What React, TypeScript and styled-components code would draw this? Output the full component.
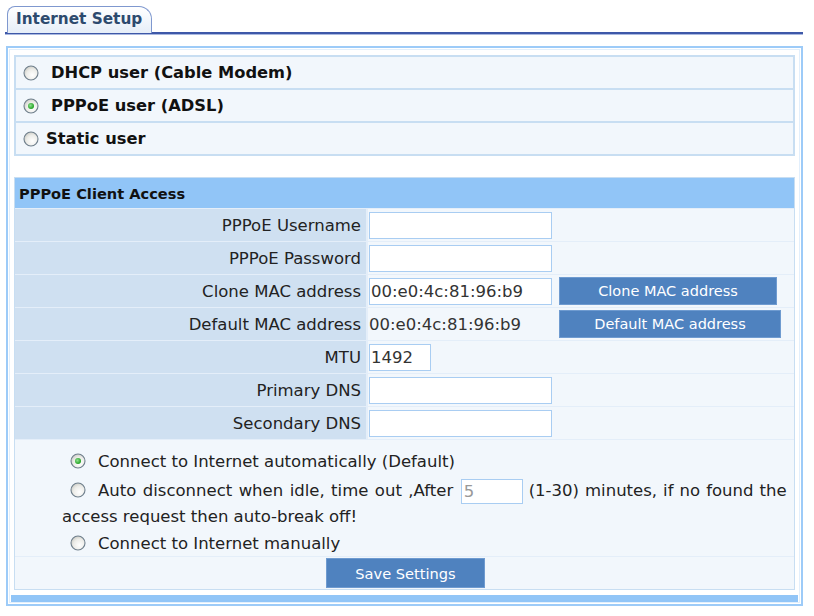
import { FC, ReactNode } from "react";
import styled, { createGlobalStyle } from "styled-components";

const GlobalStyle = createGlobalStyle`
  html, body {
    margin: 0;
    padding: 0;
    background: #fff;
  }
  body {
    font-family: "DejaVu Sans", Verdana, sans-serif;
    font-size: 16.5px;
    color: #1a1a1a;
  }
`;

const Radio: FC<{ checked?: boolean }> = ({ checked }) => (
  <RadioIcon width="16" height="16" viewBox="0 0 16 16">
    <defs>
      <radialGradient id="rbg" cx="0.6" cy="0.65" r="0.7">
        <stop offset="0" stopColor="#ffffff" />
        <stop offset="0.6" stopColor="#ecece8" />
        <stop offset="1" stopColor="#c9c9c2" />
      </radialGradient>
      <radialGradient id="rdot" cx="0.4" cy="0.4" r="0.6">
        <stop offset="0" stopColor="#8fe08f" />
        <stop offset="1" stopColor="#21a121" />
      </radialGradient>
    </defs>
    <circle cx="8" cy="8" r="7" fill="url(#rbg)" stroke="#6f7f8c" strokeWidth="1.1" />
    {checked && <circle cx="8" cy="8" r="3" fill="url(#rdot)" />}
  </RadioIcon>
);

const App: FC = () => {
  return (
    <>
      <GlobalStyle />
      <Page>
        <TabBar>
          <Tab>Internet Setup</Tab>
        </TabBar>

        <Frame>
          <ModeTable>
            <ModeRow>
              <Radio />
              <ModeLabel gap={12}>DHCP user (Cable Modem)</ModeLabel>
            </ModeRow>
            <ModeRow>
              <Radio checked />
              <ModeLabel gap={12}>PPPoE user (ADSL)</ModeLabel>
            </ModeRow>
            <ModeRow>
              <Radio />
              <ModeLabel gap={7}>Static user</ModeLabel>
            </ModeRow>
          </ModeTable>

          <Section>
            <SectionHead>PPPoE Client Access</SectionHead>
            <Field label="PPPoE Username">
              <TextInput width={183} />
            </Field>
            <Field label="PPPoE Password">
              <TextInput width={183} type="password" />
            </Field>
            <Field label="Clone MAC address">
              <TextInput width={183} defaultValue="00:e0:4c:81:96:b9" />
              <ActionButton width={218}>Clone MAC address</ActionButton>
            </Field>
            <Field label="Default MAC address">
              <PlainValue>00:e0:4c:81:96:b9</PlainValue>
              <ActionButton width={222}>Default MAC address</ActionButton>
            </Field>
            <Field label="MTU">
              <TextInput width={62} defaultValue="1492" />
            </Field>
            <Field label="Primary DNS">
              <TextInput width={183} />
            </Field>
            <Field label="Secondary DNS">
              <TextInput width={183} />
            </Field>

            <OptionCell>
              <OptionLine>
                <Radio checked />
                <span>Connect to Internet automatically (Default)</span>
              </OptionLine>
              <OptionLine tall>
                <Radio />
                <Spaced space={1.2}>Auto disconnect when idle, time out ,After </Spaced>
                <IdleInput defaultValue="5" />
                <Spaced space={0.8}> (1-30) minutes, if no found the</Spaced> access
                request then auto-break off!
              </OptionLine>
              <OptionLine>
                <Radio />
                <span>Connect to Internet manually</span>
              </OptionLine>
            </OptionCell>

            <SaveCell>
              <SaveButton>Save Settings</SaveButton>
            </SaveCell>
          </Section>

          <BottomBar />
        </Frame>
      </Page>
    </>
  );
};

const Field: FC<{ label: string; children: ReactNode }> = ({ label, children }) => (
  <FieldRow>
    <FieldLabel>{label}</FieldLabel>
    <FieldValue>{children}</FieldValue>
  </FieldRow>
);

export default App;

const Page = styled.div`
  width: 814px;
  height: 616px;
  padding-top: 6px;
  box-sizing: border-box;
  overflow: hidden;
`;

const TabBar = styled.div`
  display: flex;
  margin-left: 5px;
  width: 798px;
  padding-left: 2px;
  box-sizing: border-box;
  border-bottom: 2px solid #3e58a8;
  box-shadow: 0 1px 0 #a9b8e0;
`;

const Tab = styled.div`
  width: 145px;
  height: 27px;
  box-sizing: border-box;
  border: 1px solid #7f98cf;
  border-bottom: none;
  border-radius: 8px 13px 0 0;
  background: linear-gradient(#ffffff, #e6eef8);
  color: #2d4a6e;
  font-weight: bold;
  font-size: 15.3px;
  padding: 3px 0 0 8px;
  margin-bottom: -1px;
`;

const Frame = styled.div`
  margin: 12px 0 0 6px;
  width: 797px;
  box-sizing: border-box;
  border: 2px solid #9dcbf8;
  box-shadow: inset 0 0 0 1px #fff, inset 0 0 0 2px #e2effc;
  padding: 7px 6px 2px;
  display: flex;
  flex-direction: column;
`;

const ModeTable = styled.div`
  display: flex;
  flex-direction: column;
  border: 2px solid #c8def2;
  background: #c8def2;
  gap: 2px;
`;

const ModeRow = styled.div`
  display: flex;
  align-items: center;
  height: 31px;
  padding-left: 7px;
  background: #f2f7fc;
`;

const RadioIcon = styled.svg`
  flex: none;
  display: inline-block;
  vertical-align: middle;
`;

const ModeLabel = styled.span<{ gap: number }>`
  margin-left: ${(p) => p.gap}px;
  font-weight: bold;
  font-size: 16.3px;
  color: #111;
`;

const Section = styled.div`
  margin-top: 21px;
  display: flex;
  flex-direction: column;
  border: 1px solid #c8def2;
  background: #e4eef9;
  gap: 1px;
`;

const SectionHead = styled.div`
  height: 30px;
  display: flex;
  align-items: center;
  padding-left: 4px;
  background: #91c5f7;
  font-weight: bold;
  font-size: 14.6px;
  color: #111;
`;

const FieldRow = styled.div`
  display: grid;
  grid-template-columns: 351px 1fr;
  gap: 2px;
  height: 32px;
`;

const FieldLabel = styled.div`
  display: flex;
  align-items: center;
  justify-content: flex-end;
  padding-right: 5px;
  background: #cfe0f1;
  color: #222;
`;

const FieldValue = styled.div`
  display: flex;
  align-items: center;
  padding-left: 1px;
  background: #f2f7fc;
`;

const TextInput = styled.input<{ width: number }>`
  width: ${(p) => p.width}px;
  height: 27px;
  box-sizing: border-box;
  border: 1px solid #a9cdf2;
  background: #fff;
  font-family: "DejaVu Sans", Verdana, sans-serif;
  font-size: 16.5px;
  color: #333;
  padding: 0 1px;
  outline: none;
`;

const PlainValue = styled.span`
  width: 183px;
  color: #333;
`;

const ActionButton = styled.button<{ width: number }>`
  width: ${(p) => p.width}px;
  height: 28px;
  margin-left: 7px;
  border: 1px solid #6f9bd0;
  background: #4f82bf;
  color: #fff;
  font-family: "DejaVu Sans", Verdana, sans-serif;
  font-size: 14.5px;
  padding: 0;
`;

const OptionCell = styled.div`
  background: #f2f7fc;
  padding: 8px 0 0 47px;
  height: 116px;
  box-sizing: border-box;
`;

const OptionLine = styled.div<{ tall?: boolean }>`
  line-height: ${(p) => (p.tall ? "26px" : "27px")};
  margin-top: ${(p) => (p.tall ? "3px" : "0")};
  color: #222;

  ${RadioIcon} {
    margin: -3px 12px 0 8px;
  }
`;

const Spaced = styled.span<{ space: number }>`
  word-spacing: ${(p) => p.space}px;
`;

const IdleInput = styled.input`
  width: 62px;
  height: 25px;
  box-sizing: border-box;
  border: 1px solid #a9cdf2;
  background: #fff;
  font-family: "DejaVu Sans", Verdana, sans-serif;
  font-size: 16.5px;
  color: #999;
  padding: 0 2px;
  margin-left: 1px;
  vertical-align: middle;
  outline: none;
`;

const SaveCell = styled.div`
  height: 32px;
  display: flex;
  align-items: center;
  padding-left: 311px;
  background: #f2f7fc;
`;

const SaveButton = styled.button`
  width: 159px;
  height: 30px;
  border: 1px solid #6f9bd0;
  background: #4f82bf;
  color: #fff;
  font-family: "DejaVu Sans", Verdana, sans-serif;
  font-size: 14.6px;
  padding: 0;
`;

const BottomBar = styled.div`
  margin: 5px -3px 0;
  height: 7px;
  background: #91c5f7;
`;
